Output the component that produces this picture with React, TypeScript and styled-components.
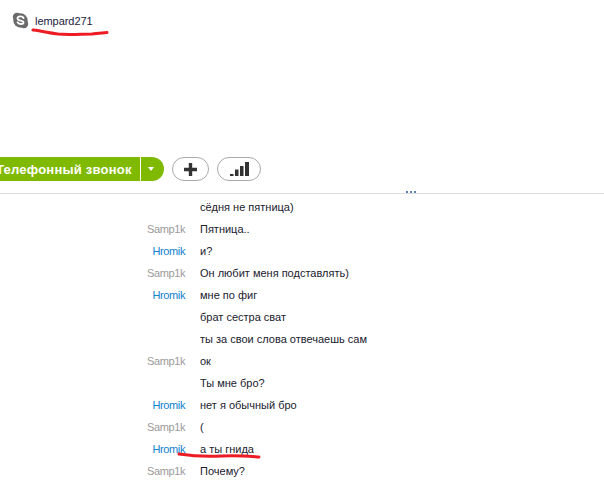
import React from "react";
import styled, { createGlobalStyle } from "styled-components";

const Global = createGlobalStyle`
  html, body { margin: 0; padding: 0; background: #fff; overflow: hidden; }
  body { font-family: "Liberation Sans", Arial, sans-serif; }
`;

const Page = styled.div`
  position: relative;
  width: 604px;
  height: 482px;
  overflow: hidden;
  background: #fff;
`;

const Header = styled.header`
  height: 157px;
  box-sizing: border-box;
  padding: 12px 0 0 12px;
  display: flex;
  align-items: flex-start;
  gap: 6px;
`;

const Name = styled.span`
  font-size: 11px;
  line-height: 16px;
  margin-top: 1px;
  letter-spacing: -0.05px;
  color: #1a1a3c;
`;

const Toolbar = styled.div`
  height: 24px;
  display: flex;
  align-items: stretch;
  margin-left: -16px;
`;

const CallButton = styled.div`
  width: 156px;
  box-sizing: border-box;
  background: #7fba00;
  color: #fff;
  font-size: 13px;
  font-weight: 700;
  letter-spacing: 0.22px;
  line-height: 26px;
  padding-left: 12px;
  border-radius: 12px 0 0 12px;
  white-space: nowrap;
`;

const CallArrow = styled.div`
  width: 23px;
  margin-left: 1px;
  background: #7fba00;
  border-radius: 0 12px 12px 0;
  display: flex;
  align-items: center;
  justify-content: center;
  padding-right: 3px;
  box-sizing: border-box;
  &::after {
    content: "";
    border-left: 3.5px solid transparent;
    border-right: 3.5px solid transparent;
    border-top: 4px solid #fff;
  }
`;

const PillButton = styled.div<{ $w: number; $gap: number }>`
  width: ${(p) => p.$w}px;
  margin-left: ${(p) => p.$gap}px;
  box-sizing: border-box;
  border: 1px solid #a9a9a9;
  border-radius: 12px;
  background: #fff;
  display: flex;
  align-items: center;
  justify-content: center;
`;

const Dots = styled.div`
  height: 12px;
  display: flex;
  justify-content: center;
  align-items: flex-end;
  gap: 2px;
  padding-left: 218px;
  box-sizing: border-box;
`;

const Dot = styled.i`
  display: block;
  width: 2px;
  height: 2px;
  background: #5b82b8;
`;

const Chat = styled.div`
  border-top: 1px solid #dcdcdc;
  padding-top: 2px;
`;

const Row = styled.div`
  display: grid;
  grid-template-columns: 185px 1fr;
  column-gap: 15px;
  height: 22px;
  font-size: 11px;
  line-height: 22px;
  white-space: nowrap;
`;

const Sender = styled.span<{ $c: "a" | "b" | "" }>`
  text-align: right;
  letter-spacing: -0.4px;
  color: ${(p) => (p.$c === "b" ? "#0f7fd0" : "#9a9a9a")};
`;

const Message = styled.span`
  color: #20202e;
`;

const Scribble = styled.svg`
  position: absolute;
  left: 0;
  top: 0;
  pointer-events: none;
`;

const rows: [string, "a" | "b" | "", string][] = [
  ["", "", "сёдня не пятница)"],
  ["Samp1k", "a", "Пятница.."],
  ["Hromik", "b", "и?"],
  ["Samp1k", "a", "Он любит меня подставлять)"],
  ["Hromik", "b", "мне по фиг"],
  ["", "", "брат сестра сват"],
  ["", "", "ты за свои слова отвечаешь сам"],
  ["Samp1k", "a", "ок"],
  ["", "", "Ты мне бро?"],
  ["Hromik", "b", "нет я обычный бро"],
  ["Samp1k", "a", "("],
  ["Hromik", "b", "а ты гнида"],
  ["Samp1k", "a", "Почему?"],
];

export default function App() {
  return (
    <Page>
      <Global />
      <Header>
        <svg width="17" height="17" viewBox="0 0 17 17">
          <circle cx="5" cy="5" r="4.2" fill="#6b6b6b" />
          <circle cx="12" cy="12" r="4.2" fill="#6b6b6b" />
          <circle cx="8.5" cy="8.5" r="7.2" fill="#6b6b6b" />
          <path d="M11.6 6C11 4.8 9.8 4.3 8.5 4.3 6.8 4.3 5.5 5 5.5 6.4c0 2.8 6 1.6 6 4 0 1-1.2 1.6-2.9 1.6-1.5 0-2.6-.7-3.1-1.8" fill="none" stroke="#fff" strokeWidth="1.8" strokeLinecap="round" />
        </svg>
        <Name>lempard271</Name>
      </Header>
      <Toolbar>
        <CallButton>Телефонный звонок</CallButton>
        <CallArrow />
        <PillButton $w={37} $gap={8}>
          <svg width="13" height="13" viewBox="0 0 13 13">
            <path d="M6.5 0v13M0 6.5h13" stroke="#333" strokeWidth="3.4" />
          </svg>
        </PillButton>
        <PillButton $w={44} $gap={8}>
          <svg width="19" height="14" viewBox="0 0 19 14">
            <path d="M0 12h3.5v2H0zM5 7.5h3.5V14H5zM10 4h3.5v10H10zM15 0h4v14h-4z" fill="#333" />
          </svg>
        </PillButton>
      </Toolbar>
      <Dots>
        <Dot />
        <Dot />
        <Dot />
      </Dots>
      <Chat>
        {rows.map((r, i) => (
          <Row key={i}>
            <Sender $c={r[1]}>{r[0]}</Sender>
            <Message>{r[2]}</Message>
          </Row>
        ))}
      </Chat>
      <Scribble width="604" height="482" viewBox="0 0 604 482">
        <path d="M33 30C42 31 50 33 58 34 68 35 82 34 92 34 97 33 102 33 107 32.5" fill="none" stroke="#ed1c24" strokeWidth="3" strokeLinecap="round" />
        <path d="M179 454C192 456 205 457 222 456 236 455 246 456 259 457" fill="none" stroke="#ed1c24" strokeWidth="3" strokeLinecap="round" />
      </Scribble>
    </Page>
  );
}
